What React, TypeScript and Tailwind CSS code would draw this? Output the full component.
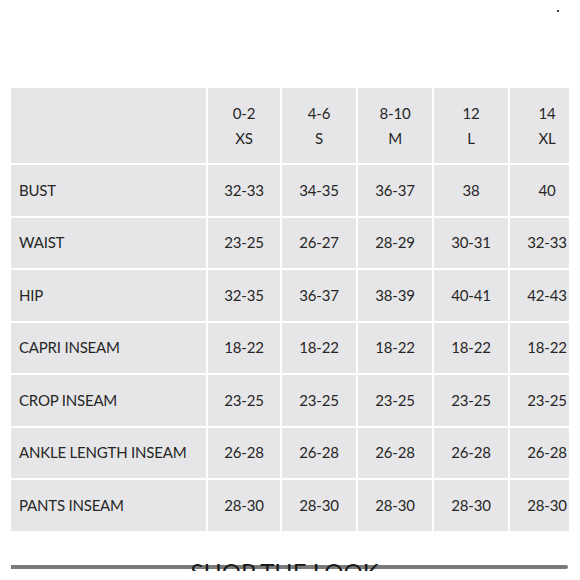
import React from "react";

const sizes = [
  ["0-2", "XS"],
  ["4-6", "S"],
  ["8-10", "M"],
  ["12", "L"],
  ["14", "XL"],
];

const rows: [string, string[]][] = [
  ["BUST", ["32-33", "34-35", "36-37", "38", "40"]],
  ["WAIST", ["23-25", "26-27", "28-29", "30-31", "32-33"]],
  ["HIP", ["32-35", "36-37", "38-39", "40-41", "42-43"]],
  ["CAPRI INSEAM", ["18-22", "18-22", "18-22", "18-22", "18-22"]],
  ["CROP INSEAM", ["23-25", "23-25", "23-25", "23-25", "23-25"]],
  ["ANKLE LENGTH INSEAM", ["26-28", "26-28", "26-28", "26-28", "26-28"]],
  ["PANTS INSEAM", ["28-30", "28-30", "28-30", "28-30", "28-30"]],
];

export default function App() {
  return (
    <div
      className="relative w-[580px] h-[580px] bg-white overflow-hidden text-[#262626]"
      style={{ fontFamily: "Lato, 'Open Sans', sans-serif" }}
    >
      <div className="absolute left-[557px] top-[10px] w-[2px] h-[2px] bg-[#444]" />
      <div className="pt-[88px] pl-[11px]">
        <div className="w-[558px] overflow-hidden">
          <div className="grid grid-cols-[195px_72px_74px_74px_74px_74px] grid-rows-[75px_repeat(7,50.5px)] gap-[2px] w-[575px] text-[15px] tracking-[-0.2px]">
            <div className="bg-[#e6e6e8]" />
            {sizes.map(([a, b]) => (
              <div
                key={a}
                className="bg-[#e6e6e8] flex flex-col items-center justify-center leading-[25px]"
              >
                <span>{a}</span>
                <span>{b}</span>
              </div>
            ))}
            {rows.map(([label, vals]) => (
              <React.Fragment key={label}>
                <div className="bg-[#e6e6e8] flex items-center pl-[8px] pb-[1px]">
                  {label}
                </div>
                {vals.map((v, i) => (
                  <div
                    key={i}
                    className="bg-[#e6e6e8] flex items-center justify-center pb-[1px]"
                  >
                    {v}
                  </div>
                ))}
              </React.Fragment>
            ))}
          </div>
        </div>
        <div className="relative mt-[33px] w-[557px] h-[7px] overflow-hidden">
          <div className="absolute left-0 right-0 top-[1px] h-[4px] bg-[#7a7a7a] rounded-r-[2px]" />
          <div className="relative -mt-[5px] text-center text-[24px] leading-[26px] text-[#1a1a1a] pr-[10px]">
            SHOP THE LOOK
          </div>
        </div>
      </div>
    </div>
  );
}
